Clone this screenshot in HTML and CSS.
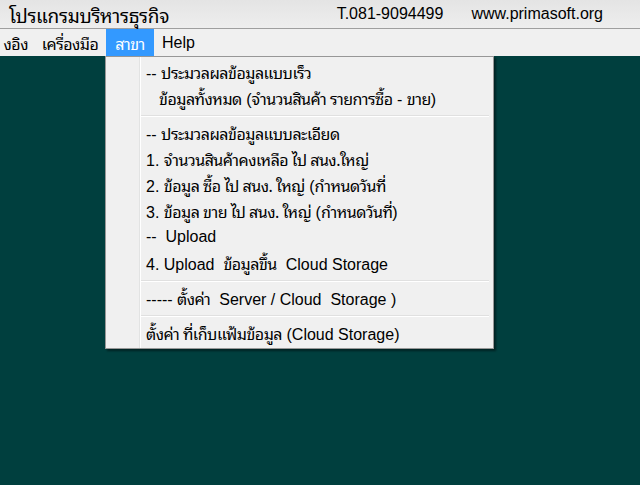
FILE: index.html
```html
<!DOCTYPE html>
<html lang="th">
<head>
<meta charset="utf-8">
<title>โปรแกรมบริหารธุรกิจ</title>
<link rel="stylesheet" href="styles.css">
</head>
<body>
<div class="window">
  <header class="titlebar">
    <span class="app-title th">โปรแกรมบริหารธุรกิจ</span>
    <span class="phone">T.081-9094499</span>
    <span class="site">www.primasoft.org</span>
  </header>
  <nav class="menubar">
    <span class="menu-item clipped"><span class="th">งอิง</span></span>
    <span class="menu-item tools"><span class="th">เครื่องมือ</span></span>
    <span class="menu-item branch active"><span class="th">สาขา</span></span>
    <span class="menu-item help">Help</span>
  </nav>
  <main class="desktop"></main>

  <div class="dropdown">
    <div class="item">-- <span class="th">ประมวลผลข้อมูลแบบเร็ว</span></div>
    <div class="item indent"><span class="th">ข้อมูลทั้งหมด</span> (<span class="th">จำนวนสินค้า รายการซื้อ</span> - <span class="th">ขาย</span>)</div>
    <div class="sep"></div>
    <div class="item">-- <span class="th">ประมวลผลข้อมูลแบบละเอียด</span></div>
    <div class="item">1. <span class="th">จำนวนสินค้าคงเหลือ ไป สนง.ใหญ่</span></div>
    <div class="item">2. <span class="th">ข้อมูล ซื้อ ไป สนง. ใหญ่</span> (<span class="th">กำหนดวันที่</span></div>
    <div class="item">3. <span class="th">ข้อมูล ขาย ไป สนง. ใหญ่</span> (<span class="th">กำหนดวันที่</span>)</div>
    <div class="item">--&nbsp; Upload</div>
    <div class="item">4. Upload&nbsp; <span class="th">ข้อมูลขึ้น</span>&nbsp; Cloud Storage</div>
    <div class="sep"></div>
    <div class="item">----- <span class="th">ตั้งค่า</span>&nbsp; Server / Cloud&nbsp; Storage )</div>
    <div class="sep"></div>
    <div class="item"><span class="th">ตั้งค่า ที่เก็บแฟ้มข้อมูล</span> (Cloud Storage)</div>
  </div>
</div>
</body>
</html>
```
FILE: styles.css
```css
html, body {
  margin: 0;
  padding: 0;
}

body {
  width: 640px;
  height: 485px;
  overflow: hidden;
  background: #003f3e;
  font-family: "Liberation Sans", "Noto Sans Thai Looped", "Noto Sans Thai", sans-serif;
  font-size: 16px;
  color: #000;
}

.th {
  font-family: "Noto Sans Thai Looped", "Noto Sans Thai", "Liberation Sans", sans-serif;
  letter-spacing: -0.5px;
}

.window {
  position: relative;
  width: 640px;
  height: 485px;
  display: flex;
  flex-direction: column;
}

.titlebar {
  height: 28px;
  border-bottom: 1px solid #9f9f9f;
  background: linear-gradient(to bottom, #e4e4e4, #eeeeee);
  display: flex;
  align-items: center;
  padding: 0 37px 0 9px;
  gap: 28px;
  white-space: nowrap;
}

.app-title {
  flex: 1;
  font-size: 19px;
  letter-spacing: -0.3px;
}

.menubar {
  height: 27px;
  background: #f0f0f0;
  display: flex;
  align-items: stretch;
  white-space: nowrap;
}

.menu-item {
  display: flex;
  align-items: center;
  justify-content: center;
  padding: 0 8px;
}

.clipped {
  width: 34px;
  padding: 0 6px 0 0;
  box-sizing: border-box;
  justify-content: flex-end;
  overflow: hidden;
}

.tools {
  width: 72px;
  padding: 0;
}

.branch {
  width: 48px;
  padding: 0;
}

.active {
  background: #3399ff;
  color: #fff;
}

.desktop {
  flex: 1;
  background: #003f3e;
}

.dropdown {
  position: absolute;
  left: 105px;
  top: 56px;
  width: 383px;
  padding: 2px;
  border: 1px solid #979797;
  background-color: #f0f0f0;
  background-image: linear-gradient(to right,
    #f0f0f0 0, #f0f0f0 33px,
    #e2e3e3 33px, #e2e3e3 34px,
    #ffffff 34px, #ffffff 35px,
    #f0f0f0 35px);
  box-shadow: 2px 2px 2px rgba(0, 0, 0, 0.45);
}

.item {
  height: 26px;
  line-height: 26px;
  padding-left: 38px;
  white-space: nowrap;
}

.item.indent {
  padding-left: 51px;
}

.sep {
  height: 9px;
  margin-left: 33px;
  margin-right: 2px;
  background: linear-gradient(to bottom,
    transparent 0, transparent 4px,
    #e0e0e0 4px, #e0e0e0 5px,
    #ffffff 5px, #ffffff 6px,
    transparent 6px);
}
```
